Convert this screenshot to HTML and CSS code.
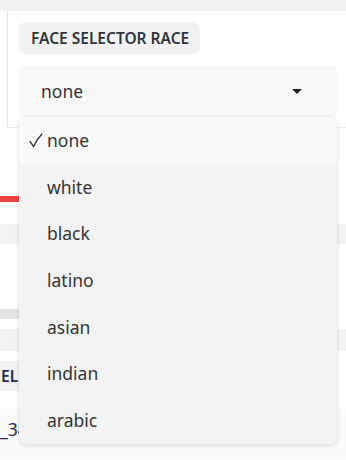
FILE: index.html
```html
<!DOCTYPE html>
<html lang="en">
<head>
    <meta charset="UTF-8">
    <meta name="viewport" content="width=device-width, initial-scale=1.0">
    <title>Face selector</title>
    <link rel="stylesheet" href="styles.css">
</head>
<body>

    <div class="topbar"></div>

    <div class="panel">
        <div class="label">FACE SELECTOR RACE</div>
        <div class="select">
            <span>none</span>
            <span class="caret"></span>
        </div>
    </div>

    <div class="below">
        <div class="progress"></div>
        <div class="band"></div>
        <div class="track"></div>
        <div class="band band-low"></div>
        <div class="label label-model">EL</div>
        <div class="field">_34</div>
    </div>

    <ul class="dropdown">
        <li class="selected">
            <svg class="check" width="14" height="15" viewBox="0 0 14 15">
                <path d="M0.8 8.2 L4.6 13.6 Q7.5 6.5 13.2 0.8" fill="none" stroke="#333" stroke-width="1.4" stroke-linejoin="round"/>
            </svg>none
        </li>
        <li>white</li>
        <li>black</li>
        <li>latino</li>
        <li>asian</li>
        <li>indian</li>
        <li>arabic</li>
    </ul>

</body>
</html>
```

FILE: styles.css
```css
body {
    font-family: 'Noto Sans', 'Open Sans', sans-serif;
    background-color: #fff;
    margin: 0;
    padding: 0;
    width: 346px;
    height: 460px;
    overflow: hidden;
    position: relative;
    color: #333;
}

.topbar {
    height: 11px;
    background: #f2f2f2;
}

.panel {
    margin-left: 7px;
    border-left: 1px solid #e6e6e6;
    border-bottom: 1px solid #ececec;
    padding: 11px 9px 10px 11px;
}

.label {
    display: inline-block;
    background: #f2f2f2;
    border-radius: 7px;
    padding: 0 11px 0 12px;
    height: 32px;
    line-height: 32px;
    font-size: 15.5px;
    font-weight: 600;
    color: #2f3540;
}

.select {
    margin-top: 11px;
    height: 52px;
    background: #f8f8f8;
    border-radius: 6px;
    display: flex;
    align-items: center;
    justify-content: space-between;
    padding: 0 35px 0 22px;
    font-size: 17.5px;
    color: #333;
}

.caret {
    width: 0;
    height: 0;
    border-left: 5px solid transparent;
    border-right: 5px solid transparent;
    border-top: 5px solid #222;
}

.below {
    padding-top: 68px;
}

.progress {
    height: 6px;
    width: 220px;
    background: #ef4444;
    border-radius: 0 3px 3px 0;
}

.band {
    margin-top: 22px;
    height: 20px;
    background: #f3f3f3;
}

.track {
    margin-top: 65px;
    height: 10px;
    width: 220px;
    background: #e4e4e6;
}

.band-low {
    margin-top: 10px;
    height: 22px;
}

.label-model {
    display: block;
    width: 80px;
    margin-top: 10px;
    padding: 0 0 0 1px;
    border-radius: 0;
    height: 30px;
    line-height: 30px;
    color: #24304a;
}

.field {
    margin-top: 18px;
    height: 50px;
    line-height: 40px;
    background: #fafafa;
    font-size: 17.5px;
    color: #24304a;
}

.dropdown {
    position: absolute;
    top: 117px;
    left: 19px;
    width: 318px;
    margin: 0;
    padding: 0;
    list-style: none;
    background: #f3f3f3;
    border-radius: 6px;
    box-shadow: 0 1px 4px rgba(0, 0, 0, 0.15);
    overflow: hidden;
}

.dropdown li {
    height: 46.7px;
    line-height: 46px;
    padding-left: 28px;
    font-size: 17.5px;
    color: #333;
    position: relative;
}

.dropdown .selected {
    background: #f9f9f9;
}

.check {
    position: absolute;
    left: 10px;
    top: 16px;
}
```
